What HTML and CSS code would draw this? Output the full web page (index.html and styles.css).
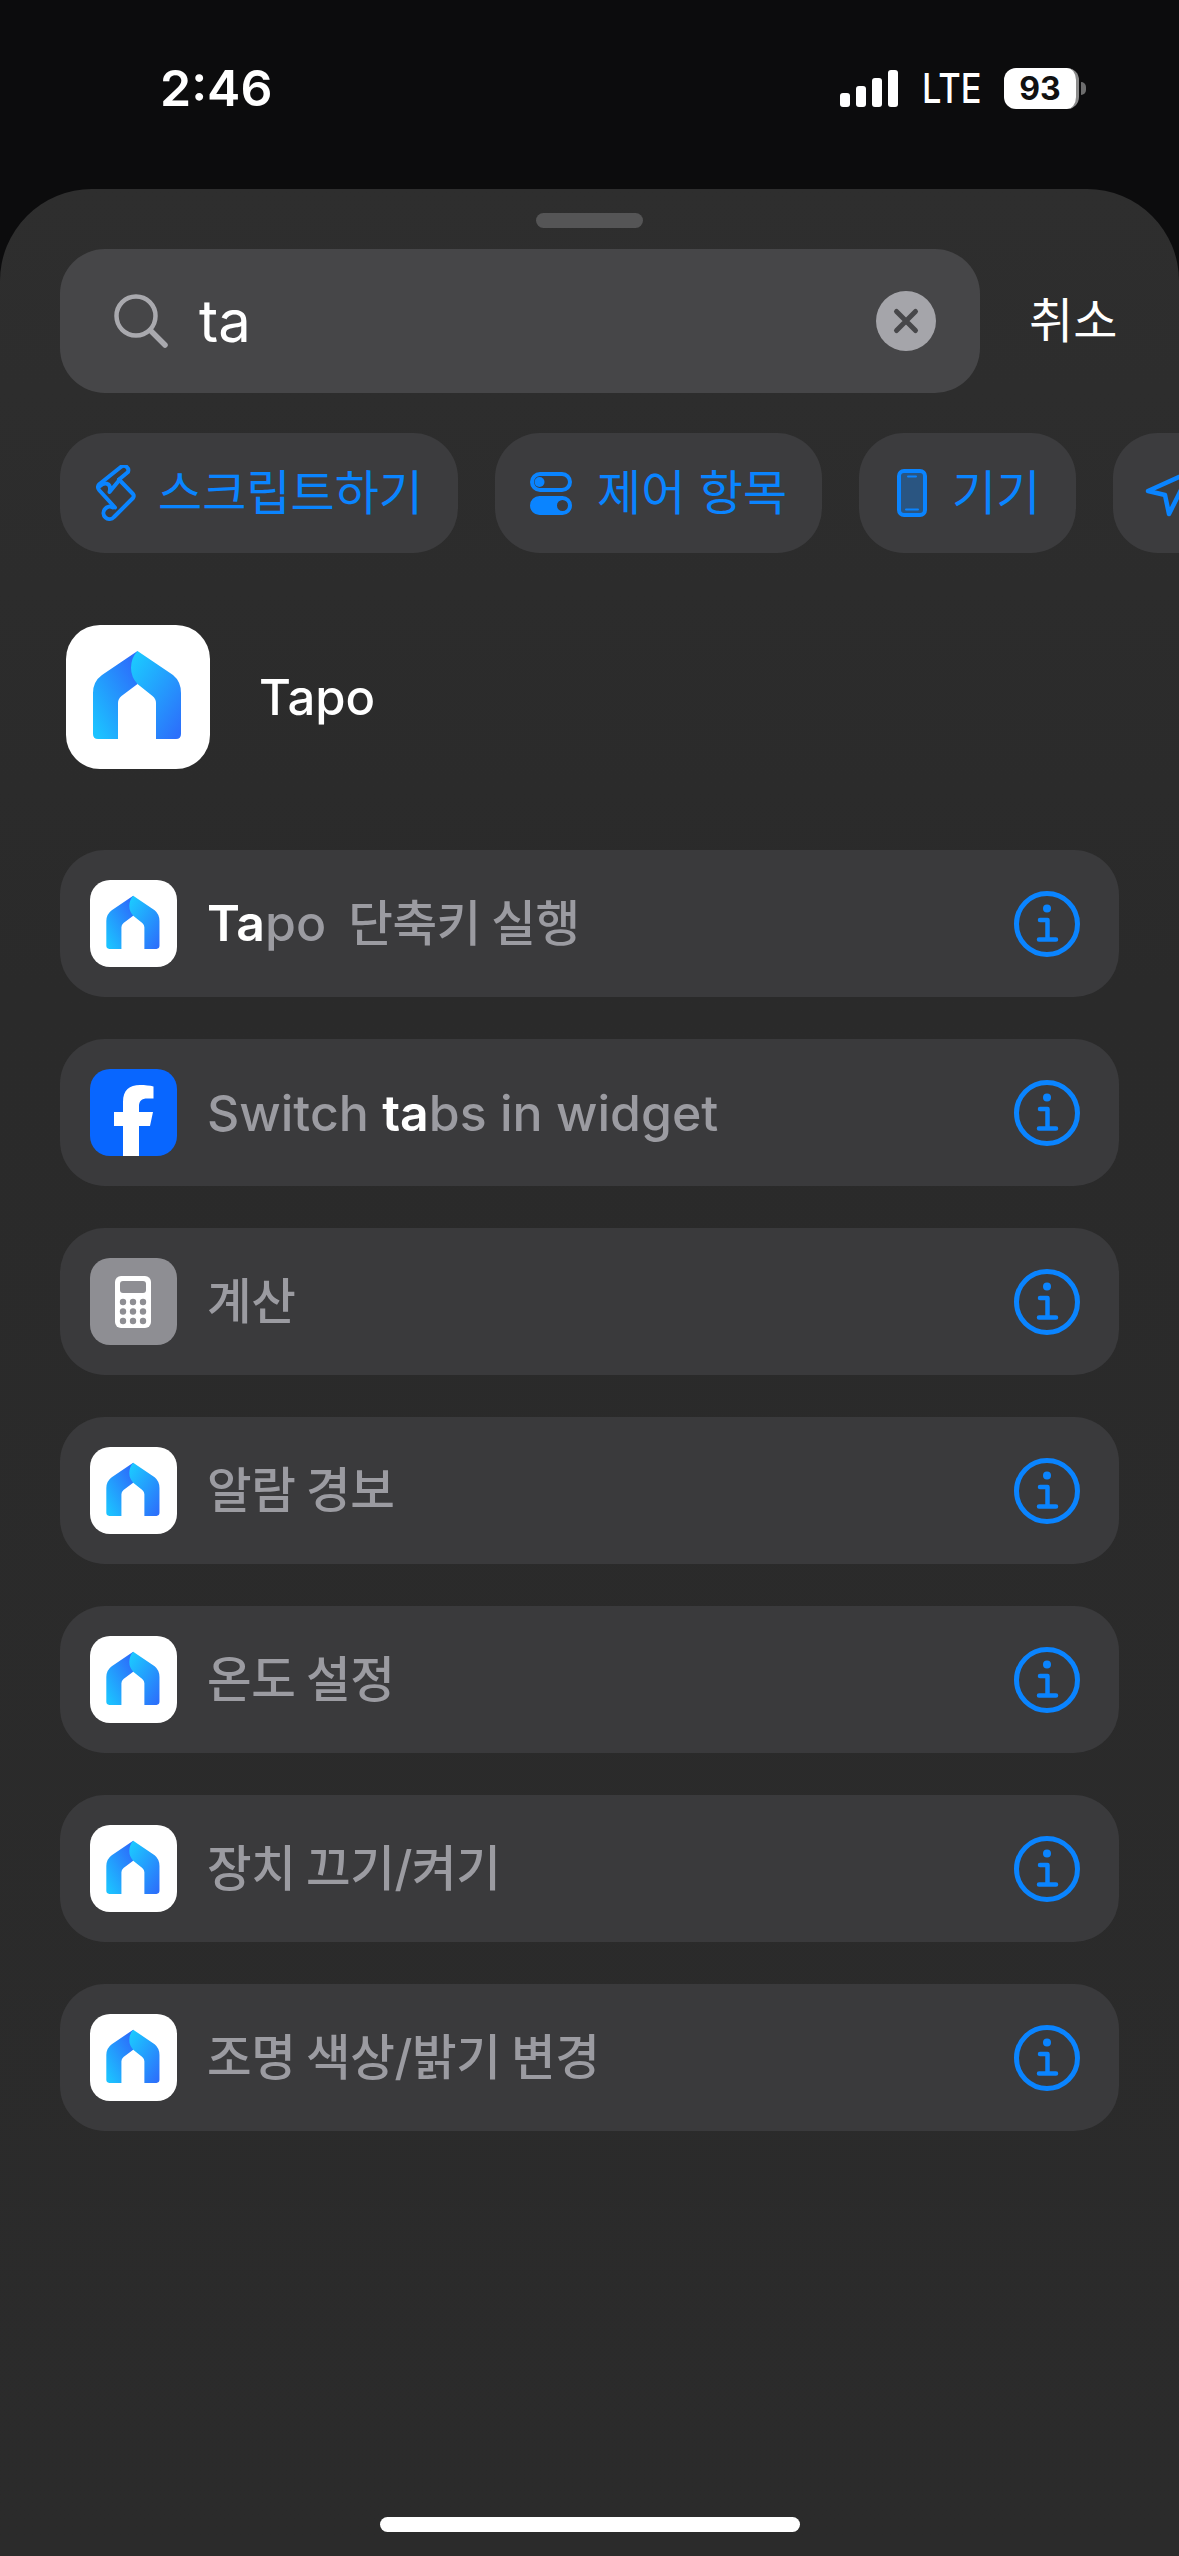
FILE: index.html
```html
<!DOCTYPE html>
<html lang="ko">
  <head>
    <meta charset="UTF-8" />
    <meta name="viewport" content="width=device-width, initial-scale=1.0" />
    <title>Shortcuts search</title>
    <link rel="stylesheet" href="styles.css">
  </head>
  <body>
    <svg class="defs" width="0" height="0">
      <defs>
        <linearGradient id="tapoLeft" x1="0.85" y1="0.1" x2="0.1" y2="0.95">
          <stop offset="0" stop-color="#2c6ffb" />
          <stop offset="1" stop-color="#1cc2ff" />
        </linearGradient>
        <linearGradient id="tapoRight" x1="0.1" y1="0.05" x2="0.9" y2="0.98">
          <stop offset="0" stop-color="#1cc8ff" />
          <stop offset="1" stop-color="#2c70fb" />
        </linearGradient>
        <symbol id="tapo" viewBox="0 0 144 144">
          <path fill="url(#tapoLeft)" d="M71.500 26 L36 50 Q27 56.500 27 68 V109 Q27 114 32 114 H52 V78 Q52 74 55.500 71 L71.500 59 Z" />
          <path fill="url(#tapoRight)" d="M71.500 26 L107 50 Q115 56.500 115 68 V109 Q115 114 110 114 H90 V78 Q90 74 86.500 71 L71.500 59 Q65 52 65 43 Q65 33 71.500 26 Z" />
        </symbol>
        <symbol id="info" viewBox="0 0 66 66">
          <circle cx="33" cy="33" r="30.500" fill="none" stroke="#0a84ff" stroke-width="5" />
          <circle cx="33" cy="17.500" r="4" fill="#0a84ff" />
          <path d="M26 29 H33.500 V48 M25 48.500 H42" fill="none" stroke="#0a84ff" stroke-width="4.500" stroke-linecap="round" stroke-linejoin="round" />
        </symbol>
      </defs>
    </svg>

    <div class="status">
      <span class="time">2:46</span>
      <div class="status-right">
        <div class="signal">
          <i class="b1"></i><i class="b2"></i><i class="b3"></i><i class="b4"></i>
        </div>
        <span class="lte">LTE</span>
        <div class="battery"><span class="battery-num">93</span></div>
        <span class="battery-tip"></span>
      </div>
    </div>

    <div class="sheet">
      <div class="handle"></div>

      <div class="search-row">
        <div class="search">
          <svg class="search-icon" viewBox="0 0 54 54">
            <circle cx="22" cy="22" r="19.500" fill="none" stroke="#a9a9ae" stroke-width="4.500" />
            <path d="M36.500 36.500 L51 51" stroke="#a9a9ae" stroke-width="5.500" stroke-linecap="round" />
          </svg>
          <span class="search-text">ta</span>
          <div class="clear">
            <svg viewBox="0 0 60 60" width="60" height="60">
              <path d="M20.500 20.500 L39.500 39.500 M39.500 20.500 L20.500 39.500" stroke="#47474a" stroke-width="5" stroke-linecap="round" />
            </svg>
          </div>
        </div>
        <span class="cancel">취소</span>
      </div>

      <div class="chips">
        <div class="chip chip-script">
          <svg class="chip-icon" width="40" height="56" viewBox="0 0 40 56" fill="none" stroke="#0a84ff" stroke-width="4" stroke-linejoin="round" stroke-linecap="round">
            <path d="M23 14.500 L32 7 A4.500 4.500 0 0 0 25.500 1.500 L3.500 19 Q0.500 22 3.500 25.500 L19 42.500" />
            <path d="M23 14.500 L37 29 Q38.500 31 37 33 L18 52 A6 6 0 0 1 9 44 A6 6 0 0 1 17 42.500" />
            <path d="M4 21 Q8.500 17 12.500 19.500 Q15 22 13.500 27 L23 15.500" />
          </svg>
          <span>스크립트하기</span>
        </div>
        <div class="chip chip-control">
          <svg class="chip-icon" width="42" height="43" viewBox="0 0 42 43">
            <rect x="2" y="2" width="38" height="16" rx="8" fill="none" stroke="#0a84ff" stroke-width="4" />
            <circle cx="9.500" cy="10" r="5" fill="#0a84ff" />
            <path fill="#0a84ff" fill-rule="evenodd" d="M9.500 24 H32.500 A9.500 9.500 0 0 1 32.500 43 H9.500 A9.500 9.500 0 0 1 9.500 24 Z M32.500 28 A5.500 5.500 0 1 0 32.500 39 A5.500 5.500 0 1 0 32.500 28 Z" />
          </svg>
          <span>제어 항목</span>
        </div>
        <div class="chip chip-device">
          <svg class="chip-icon" width="30" height="48" viewBox="0 0 30 48">
            <rect x="2" y="2" width="26" height="44" rx="5" fill="#0a84ff" fill-opacity="0.35" stroke="#0a84ff" stroke-width="4" />
            <path d="M11 7.500 H19 M9 40.500 H21" stroke="#0a84ff" stroke-width="2" stroke-linecap="round" />
          </svg>
          <span>기기</span>
        </div>
        <div class="chip chip-location">
          <svg class="chip-icon" width="48" height="48" viewBox="0 0 48 48">
            <path d="M3 22 L45 3 L24 45 L20 26 Z" fill="none" stroke="#0a84ff" stroke-width="4.500" stroke-linejoin="round" />
          </svg>
        </div>
      </div>

      <div class="app">
        <svg class="app-icon"><use href="#tapo" /></svg>
        <span class="app-name">Tapo</span>
      </div>

      <div class="list">
        <div class="row">
          <div class="row-icon white"><svg><use href="#tapo" /></svg></div>
          <span class="row-text"><b>Ta</b>po<span class="ko after-name">단축키 실행</span></span>
          <svg class="info"><use href="#info" /></svg>
        </div>
        <div class="row">
          <div class="row-icon fb">
            <svg viewBox="0 0 87 87">
              <path fill="#fff" d="M33 87 V57 H24 V43 H33 V33 C33 21 39.500 16 50 16 C55 16 60 16.500 63.500 17.500 V29.500 H57.500 C51.500 29.500 49 32 49 37.500 V43 H63 L60 57 H49 V87 Z" />
            </svg>
          </div>
          <span class="row-text">Switch <b>ta</b>bs in widget</span>
          <svg class="info"><use href="#info" /></svg>
        </div>
        <div class="row">
          <div class="row-icon calc">
            <svg viewBox="0 0 87 87">
              <rect x="25" y="18" width="36" height="52" rx="6" fill="#fff" />
              <rect x="30" y="23" width="26" height="12" rx="3" fill="#8e8e93" />
              <g fill="#8e8e93">
                <circle cx="33" cy="44" r="3.200" /><circle cx="43" cy="44" r="3.200" /><circle cx="53" cy="44" r="3.200" />
                <circle cx="33" cy="53.500" r="3.200" /><circle cx="43" cy="53.500" r="3.200" /><circle cx="53" cy="53.500" r="3.200" />
                <circle cx="33" cy="63" r="3.200" /><circle cx="43" cy="63" r="3.200" /><circle cx="53" cy="63" r="3.200" />
              </g>
            </svg>
          </div>
          <span class="row-text ko">계산</span>
          <svg class="info"><use href="#info" /></svg>
        </div>
        <div class="row">
          <div class="row-icon white"><svg><use href="#tapo" /></svg></div>
          <span class="row-text ko">알람 경보</span>
          <svg class="info"><use href="#info" /></svg>
        </div>
        <div class="row">
          <div class="row-icon white"><svg><use href="#tapo" /></svg></div>
          <span class="row-text ko">온도 설정</span>
          <svg class="info"><use href="#info" /></svg>
        </div>
        <div class="row">
          <div class="row-icon white"><svg><use href="#tapo" /></svg></div>
          <span class="row-text ko">장치 끄기/켜기</span>
          <svg class="info"><use href="#info" /></svg>
        </div>
        <div class="row">
          <div class="row-icon white"><svg><use href="#tapo" /></svg></div>
          <span class="row-text ko">조명 색상/밝기 변경</span>
          <svg class="info"><use href="#info" /></svg>
        </div>
      </div>

      <div class="home-bar"></div>
    </div>
  </body>
</html>
```

FILE: styles.css
```css
* {
  box-sizing: border-box;
}

html,
body {
  margin: 0;
  height: 2556px;
  overflow: hidden;
}

body {
  font-family: "Inter", "Noto Sans CJK KR", sans-serif;
  background-color: #0c0c0d;
  color: #fff;
  display: flex;
  flex-direction: column;
}

.defs {
  position: absolute;
}

/* status bar */
.status {
  height: 189px;
  flex: none;
  display: flex;
  justify-content: space-between;
  align-items: flex-start;
  padding: 58px 0 0 160px;
}

.time {
  font-size: 50px;
  font-weight: 600;
  line-height: 60px;
}

.status-right {
  display: flex;
  align-items: center;
  height: 60px;
  padding-right: 93px;
}

.signal {
  display: flex;
  align-items: flex-end;
  gap: 6px;
  height: 37px;
}

.signal i {
  width: 10px;
  background: #fff;
  border-radius: 3px;
}

.signal .b1 {
  height: 14px;
}

.signal .b2 {
  height: 21px;
}

.signal .b3 {
  height: 29px;
}

.signal .b4 {
  height: 37px;
}

.lte {
  width: 57px;
  margin-left: 24px;
  font-size: 41px;
  font-weight: 500;
  line-height: 40px;
  white-space: nowrap;
  transform: scaleX(0.84);
  transform-origin: left center;
}

.battery {
  width: 75px;
  height: 41px;
  margin-left: 25px;
  background: #fff;
  border-radius: 12px;
  border-right: 3px solid #8b8b8b;
  display: flex;
  align-items: center;
  justify-content: center;
}

.battery-num {
  color: #111;
  font-size: 32px;
  font-weight: 700;
  line-height: 41px;
}

.battery-tip {
  width: 5px;
  height: 13px;
  margin-left: 2px;
  background: #6d6d6d;
  border-radius: 0 6px 6px 0;
}

/* sheet */
.sheet {
  flex: 1;
  overflow: hidden;
  display: flex;
  flex-direction: column;
  padding: 24px 0 24px 60px;
  background: linear-gradient(#2e2e2e, #2a2a2a 800px, #2b2b2b);
  border-radius: 92px 92px 0 0;
}

.handle {
  width: 107px;
  height: 15px;
  background: #555556;
  border-radius: 8px;
  margin: 0 0 21px 476px;
}

.search-row {
  display: flex;
  align-items: center;
}

.search {
  width: 920px;
  height: 144px;
  flex: none;
  display: flex;
  align-items: center;
  padding: 0 44px 0 54px;
  background: #464648;
  border-radius: 45px;
}

.search-icon {
  width: 54px;
  height: 54px;
  flex: none;
}

.search-text {
  font-size: 58px;
  font-weight: 400;
  margin-left: 31px;
  flex: 1;
}

.clear {
  width: 60px;
  height: 60px;
  flex: none;
  background: #a5a5aa;
  border-radius: 50%;
}

.clear svg {
  display: block;
}

.cancel {
  font-size: 48px;
  line-height: 60px;
  margin-left: 49px;
  white-space: nowrap;
}

.chips {
  display: flex;
  gap: 37px;
  margin-top: 40px;
}

.chip {
  height: 120px;
  flex: none;
  display: flex;
  align-items: center;
  background: #3c3c3e;
  border-radius: 45px;
  color: #0a84ff;
  font-size: 48px;
  line-height: 60px;
  white-space: nowrap;
}

.chip-icon {
  flex: none;
}

.chip-script {
  width: 398px;
  padding-left: 36px;
  gap: 22px;
}

.chip-control {
  width: 327px;
  padding-left: 35px;
  gap: 25px;
}

.chip-device {
  width: 217px;
  padding-left: 38px;
  gap: 25px;
}

.chip-location {
  width: 120px;
  padding-left: 32px;
}

.app {
  display: flex;
  align-items: center;
  margin: 72px 0 0 6px;
}

.app-icon {
  width: 144px;
  height: 144px;
  background: #fff;
  border-radius: 34px;
  flex: none;
}

.app-name {
  font-size: 49px;
  font-weight: 500;
  margin-left: 49px;
}

.list {
  display: flex;
  flex-direction: column;
  gap: 42px;
  width: 1059px;
  margin-top: 81px;
}

.row {
  height: 147px;
  display: flex;
  align-items: center;
  padding: 0 39px 0 30px;
  background: #3a3a3c;
  border-radius: 45px;
}

.row-icon {
  width: 87px;
  height: 87px;
  flex: none;
  border-radius: 20px;
  overflow: hidden;
}

.row-icon svg {
  display: block;
  width: 87px;
  height: 87px;
}

.white {
  background: #fff;
}

.fb {
  background: #0866ff;
}

.calc {
  background: #8e8e93;
}

.row-text {
  flex: 1;
  margin-left: 30px;
  font-size: 50px;
  font-weight: 500;
  line-height: 60px;
  color: #9b9ba1;
  white-space: nowrap;
}

.row-text b {
  color: #fff;
  font-weight: 600;
}

.ko {
  font-size: 48.5px;
  word-spacing: -2px;
  letter-spacing: -0.4px;
}

.after-name {
  margin-left: 22px;
}

.info {
  width: 66px;
  height: 66px;
  flex: none;
}

.home-bar {
  width: 420px;
  height: 15px;
  background: #fff;
  border-radius: 8px;
  margin: auto 0 0 320px;
}
```
